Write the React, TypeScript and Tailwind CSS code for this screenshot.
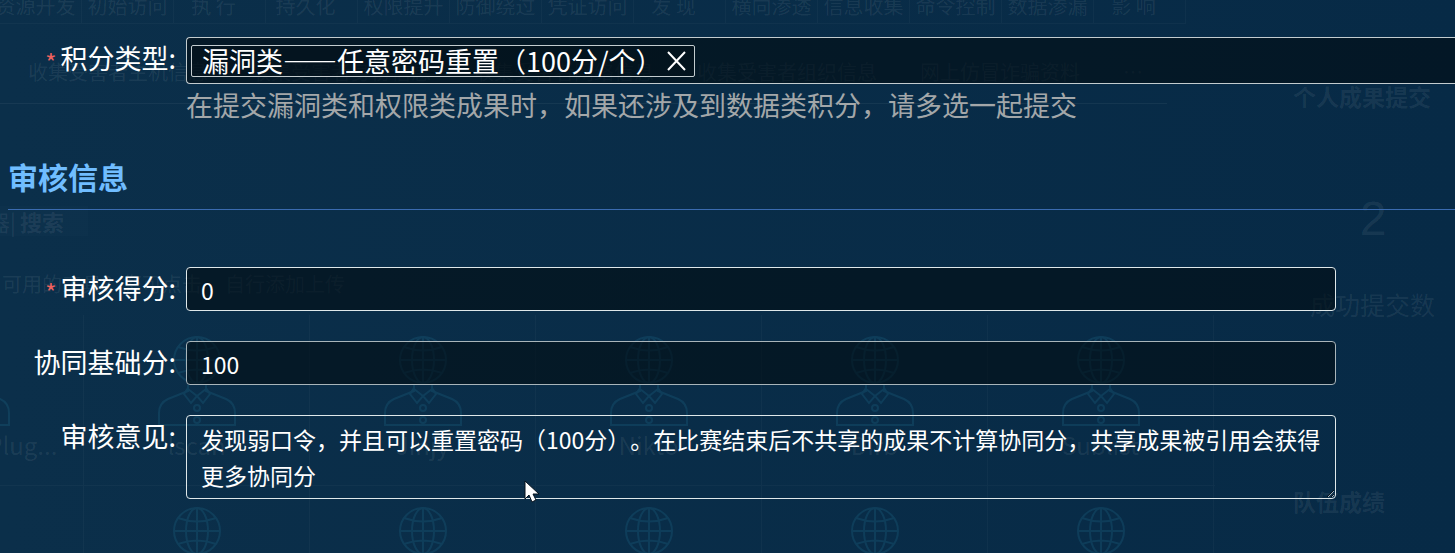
import { useState } from "react";
import type { ReactNode } from "react";

const tactics = [
  "资源开发",
  "初始访问",
  "执 行",
  "持久化",
  "权限提升",
  "防御绕过",
  "凭证访问",
  "发 现",
  "横向渗透",
  "信息收集",
  "命令控制",
  "数据渗漏",
  "影 响",
];

const techniques = [
  "收集受害者主机信息",
  "收集受害者身份信息",
  "收集受害者网络信息",
  "收集受害者组织信息",
  "网上仿冒诈骗资料",
  "…",
];

const tools = ["WebScanPlug...", "lscan", "Jinjy", "Nikto", "Dirb", "Sublist"];

function ToolIcon() {
  return (
    <svg
      width="80"
      height="92"
      viewBox="0 0 80 92"
      fill="none"
      stroke="#1c6484"
      strokeWidth="2"
      className="opacity-30"
    >
      <circle cx="40" cy="25" r="23" />
      <ellipse cx="40" cy="25" rx="11" ry="23" />
      <path d="M40 2v46M17 25h46M21 12q19 7 38 0M21 38q19-7 38 0" />
      <path d="M31 50v6l-20 8q-9 4-9 14v12h76V78q0-10-9-14l-20-8v-6" />
      <path d="M31 53l-4 6 7 9 6-7 6 7 7-9-4-6M31 54l9 7 9-7" />
      <circle cx="40" cy="73" r="3" />
      <circle cx="40" cy="85" r="3" />
    </svg>
  );
}

function ToolRow() {
  return (
    <div className="-ml-[142px] flex h-[171px] border-b border-white/3">
      {tools.map((name) => (
        <div
          key={name}
          className="flex w-[226px] shrink-0 flex-col items-center border-r border-white/3 pt-5"
        >
          <ToolIcon />
          <span className="text-2xl leading-9">{name}</span>
        </div>
      ))}
    </div>
  );
}

// The dimmed dashboard that shows through behind the form
function Backdrop() {
  return (
    <div
      aria-hidden="true"
      className="absolute inset-0 flex overflow-hidden text-xl text-white/8 select-none"
    >
      <div className="min-w-0 flex-1 overflow-hidden">
        <div className="-ml-[10px] flex h-6 w-[1196px]">
          {tactics.map((name) => (
            <div
              key={name}
              className={`w-[92px] shrink-0 border-r border-b border-white/3 text-center leading-[12px] whitespace-nowrap ${
                name.length < 4 ? "pr-3" : ""
              }`}
            >
              {name}
            </div>
          ))}
        </div>
        <div className="mr-12 flex h-20 items-center gap-[43px] border-b border-white/5 pt-4 pl-7 whitespace-nowrap">
          {techniques.map((name) => (
            <span key={name}>{name}</span>
          ))}
        </div>
        <div className="mt-[102px] flex h-[30px] w-[88px] items-center justify-end gap-1 bg-white/1 pr-6 text-[22px] whitespace-nowrap">
          <span>器|</span>
          <span className="font-bold">搜索</span>
        </div>
        <div className="mt-[34px] flex h-[45px] pl-0.5 leading-[28px] whitespace-nowrap">
          <span className="w-[223px]">可用的工具？您可点击</span>
          <span>自行添加上传</span>
        </div>
        <ToolRow />
        <ToolRow />
      </div>
      <div className="flex w-60 shrink-0 flex-col">
        <div className="mt-[78px] pl-[78px] text-[23px] leading-9 font-bold">
          个人成果提交
        </div>
        <div className="mt-[74px] pl-[76px] text-center font-['Liberation_Sans',sans-serif] text-5xl leading-[62px]">
          2
        </div>
        <div className="mt-9 pl-[95px] text-[25px] leading-9">成功提交数</div>
        <div className="mt-[161px] pl-[78px] text-[23px] leading-9 font-bold">
          队伍成绩
        </div>
      </div>
    </div>
  );
}

type fieldProps = {
  id: string;
  label: string;
  required?: boolean;
  children: ReactNode;
};

function Field(props: fieldProps) {
  return (
    <div className="flex items-start gap-[10px]">
      <label
        htmlFor={props.id}
        className="flex w-44 shrink-0 items-center justify-end text-[27px] leading-[42px] whitespace-nowrap"
      >
        {props.required && (
          <span className="mr-1 pt-2 text-2xl text-[#f0625f]">*</span>
        )}
        {props.label}:
      </label>
      <div className="min-w-0 flex-1">{props.children}</div>
    </div>
  );
}

function Cursor() {
  return (
    <svg
      width="16"
      height="24"
      viewBox="0 0 16 24"
      className="absolute top-[480px] left-[524px]"
    >
      <path
        d="M1 1v18l4-4 3 7 4-2-3-6h6z"
        fill="#fff"
        stroke="#06121c"
        strokeWidth="1"
      />
    </svg>
  );
}

export default function App() {
  const [tags, setTags] = useState(["漏洞类——任意密码重置（100分/个）"]);

  return (
    <main
      lang="zh-CN"
      className="relative min-h-screen overflow-hidden bg-linear-to-r from-[#0b2f4a] to-[#072a46] font-['Noto_Sans_CJK_SC',sans-serif] text-white [text-spacing-trim:space-all]"
    >
      <Backdrop />
      <form className="relative pt-[37px]">
        <Field id="type" label="积分类型" required>
          <div className="flex h-[47px] items-center gap-2 rounded-l-sm border border-r-0 border-[#c3cccf] bg-[#020b10]/60 pl-1">
            {tags.map((tag) => (
              <span
                key={tag}
                className="flex h-8 items-center gap-1 rounded-xs border border-[#c3cccf] bg-black/20 pr-2 pl-[10px] text-[27px] leading-8 whitespace-nowrap"
              >
                {tag}
                <button
                  type="button"
                  aria-label="移除"
                  onClick={() => setTags(tags.filter((t) => t !== tag))}
                >
                  <svg
                    width="19"
                    height="20"
                    viewBox="0 0 19 20"
                    stroke="#fff"
                    strokeWidth="2"
                  >
                    <path d="M1 1l17 18M18 1L1 19" />
                  </svg>
                </button>
              </span>
            ))}
            <input
              id="type"
              className="min-w-0 flex-1 bg-transparent outline-none"
            />
          </div>
          <p className="text-[27px] leading-[41px] text-[#a3a7a9]">
            在提交漏洞类和权限类成果时，如果还涉及到数据类积分，请多选一起提交
          </p>
        </Field>
        <h2 className="mt-[26px] ml-2 border-b border-[#3a6bb0] pb-2 text-3xl leading-[50px] font-bold text-[#70bdff]">
          审核信息
        </h2>
        <div className="mt-[57px] mr-[119px] flex flex-col gap-[30px]">
          <Field id="score" label="审核得分" required>
            <input
              id="score"
              defaultValue="0"
              className="block h-11 w-full rounded-sm border border-[#dfe8ea] bg-[#020b10]/60 px-[14px] pt-0.5 text-[23px]"
            />
          </Field>
          <Field id="base" label="协同基础分">
            <input
              id="base"
              defaultValue="100"
              className="block h-11 w-full rounded-sm border border-[#a9b5ba] bg-[#020b10]/60 px-[14px] pt-0.5 text-[23px]"
            />
          </Field>
          <Field id="opinion" label="审核意见">
            <textarea
              id="opinion"
              rows={2}
              defaultValue="发现弱口令，并且可以重置密码（100分）。在比赛结束后不共享的成果不计算协同分，共享成果被引用会获得更多协同分"
              className="block h-[84px] w-full resize-y overflow-hidden rounded-sm border border-[#dfe8ea] bg-transparent px-[14px] pt-[5px] text-[23px] leading-9 [text-spacing-trim:space-all]"
            />
          </Field>
        </div>
      </form>
      <Cursor />
    </main>
  );
}
